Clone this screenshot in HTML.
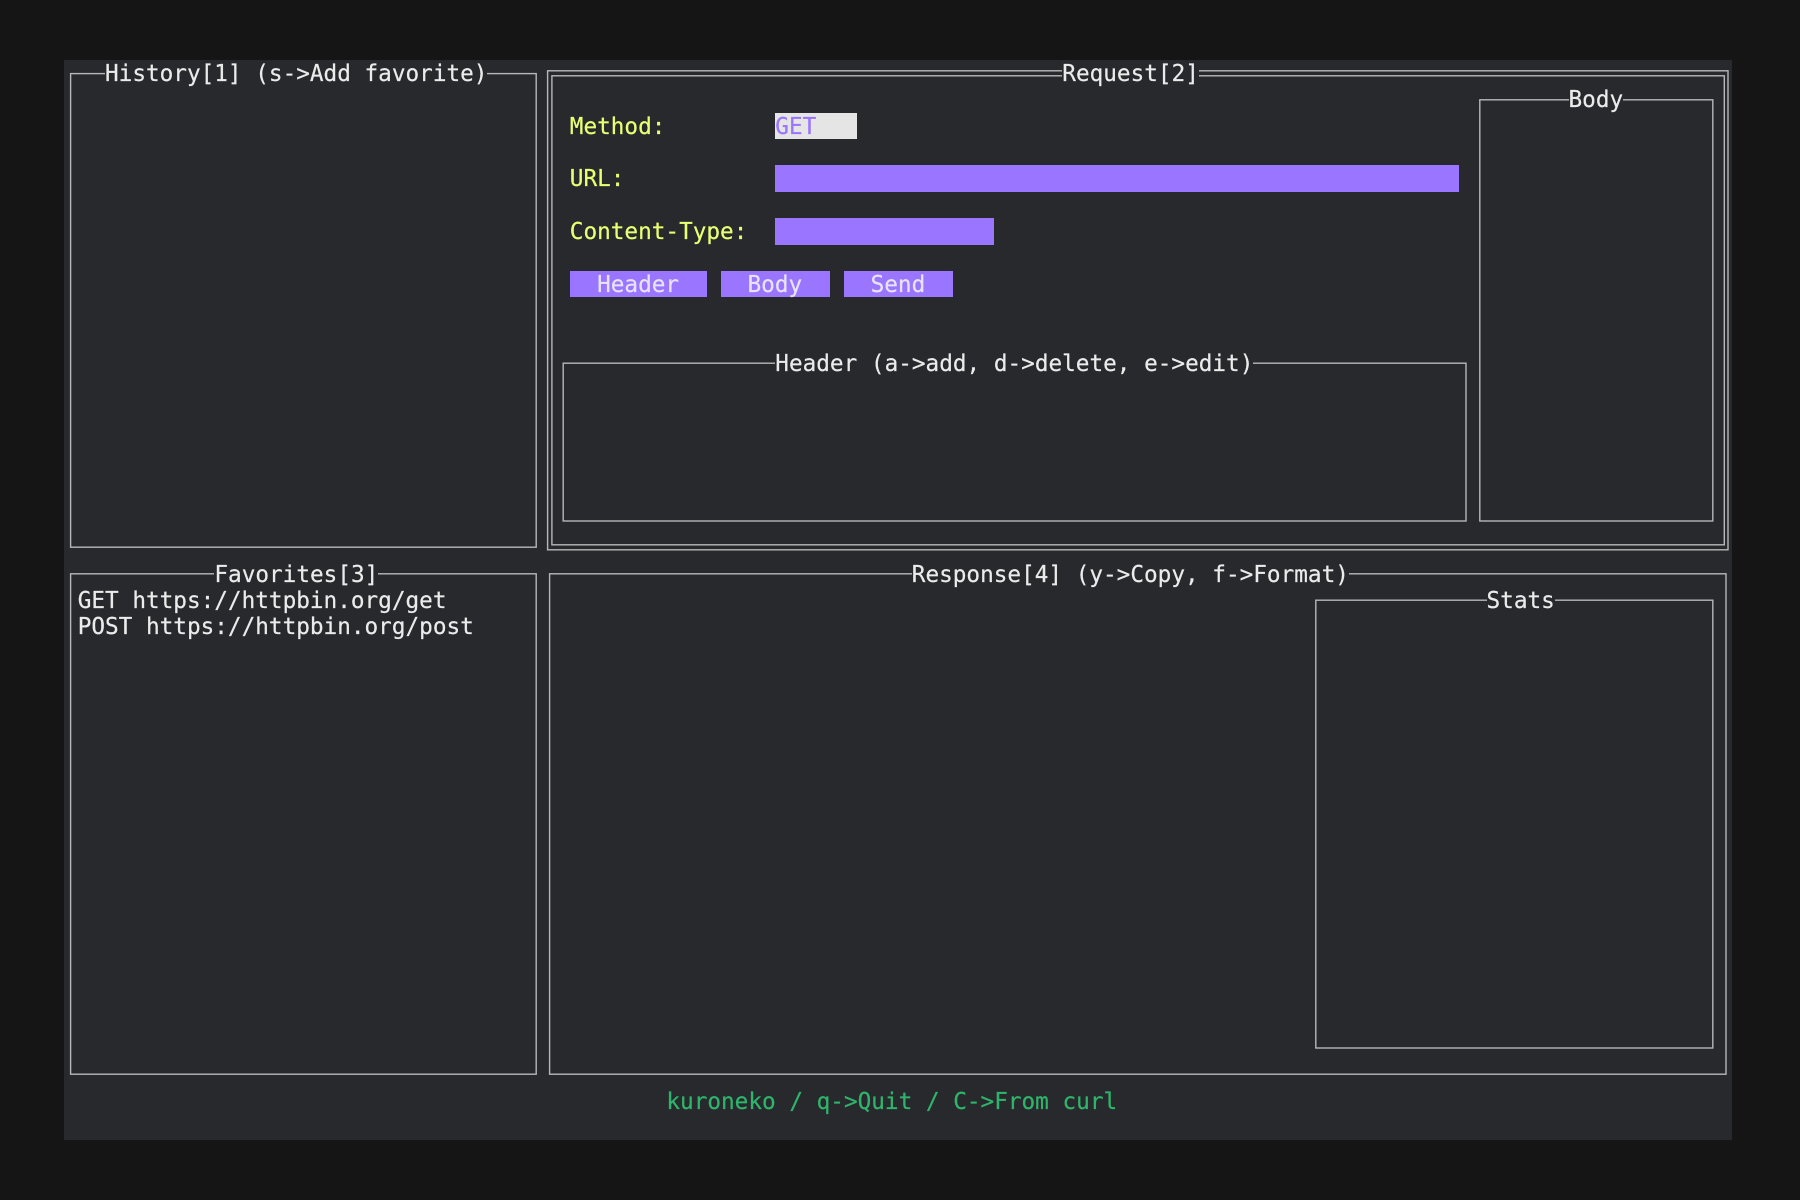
<!DOCTYPE html>
<html lang="en">
<head>
<meta charset="utf-8">
<title>kuroneko</title>
<style>
html,body{margin:0;padding:0;width:1800px;height:1200px;overflow:hidden;background:#151515;}
#term{position:absolute;left:64px;top:60px;width:1668px;height:1080px;background:#27292d;}
svg{position:absolute;left:0;top:0;}
.t{position:absolute;margin-top:1.2px;font-family:"DejaVu Sans Mono","Liberation Mono",monospace;font-size:22.7px;line-height:26.34px;height:25px;white-space:pre;color:#ebebeb;background:#27292d;-webkit-text-stroke:0.2px currentColor;}
.n{background:none;}
.y{color:#e9ff73;background:none;}
.g{color:#2fb56b;background:none;}
.f{position:absolute;background:#9a75ff;}
.b{color:#e8e3fa;background:none;}
</style>
</head>
<body>
<div id="term"></div>
<svg width="1800" height="1200" fill="none" stroke="#b6b7b8" stroke-width="1.4">
<rect x="70.6" y="73.6" width="465.6" height="473.6"/>
<rect x="70.6" y="573.8" width="465.6" height="500.4"/>
<rect x="547.6" y="70.8" width="1180.4" height="479"/>
<rect x="551.9" y="75.8" width="1172.4" height="469"/>
<rect x="1479.8" y="99.8" width="233" height="421.2"/>
<rect x="563.2" y="363.2" width="902.8" height="157.8"/>
<rect x="549.6" y="573.8" width="1176.4" height="500.4"/>
<rect x="1315.8" y="600.2" width="397" height="447.8"/>
</svg>

<div class="f" style="left:775px;top:112.7px;width:82.4px;height:26.3px;background:#e5e5e5"></div>
<div class="f" style="left:775px;top:165.3px;width:684.2px;height:26.4px"></div>
<div class="f" style="left:775px;top:218px;width:219.4px;height:26.6px"></div>
<div class="f" style="left:570px;top:270.7px;width:137px;height:26.3px"></div>
<div class="f" style="left:720.5px;top:270.7px;width:109.5px;height:26.3px"></div>
<div class="f" style="left:843.8px;top:270.7px;width:109.4px;height:26.3px"></div>

<div class="t" style="left:105px;top:60px">History[1] (s-&gt;Add favorite)</div>
<div class="t" style="left:1062.3px;top:60px">Request[2]</div>
<div class="t" style="left:1568.5px;top:86.3px">Body</div>
<div class="t" style="left:775.3px;top:349.5px">Header (a-&gt;add, d-&gt;delete, e-&gt;edit)</div>
<div class="t" style="left:214.4px;top:560.6px">Favorites[3]</div>
<div class="t" style="left:911.8px;top:560.6px">Response[4] (y-&gt;Copy, f-&gt;Format)</div>
<div class="t" style="left:1486.5px;top:586.8px">Stats</div>

<div class="t y" style="left:569.8px;top:112.7px">Method:</div>
<div class="t y" style="left:569.8px;top:165.3px">URL:</div>
<div class="t y" style="left:569.8px;top:218px">Content-Type:</div>
<div class="t n" style="left:775.3px;top:112.7px;color:#9a75ff">GET</div>
<div class="t b" style="left:597.1px;top:270.7px">Header</div>
<div class="t b" style="left:747.5px;top:270.7px">Body</div>
<div class="t b" style="left:870.6px;top:270.7px">Send</div>

<div class="t n" style="left:77.7px;top:586.8px">GET https://httpbin.org/get</div>
<div class="t n" style="left:77.7px;top:613.3px">POST https://httpbin.org/post</div>
<div class="t g" style="left:666.4px;top:1087.5px">kuroneko / q-&gt;Quit / C-&gt;From curl</div>
</body>
</html>
